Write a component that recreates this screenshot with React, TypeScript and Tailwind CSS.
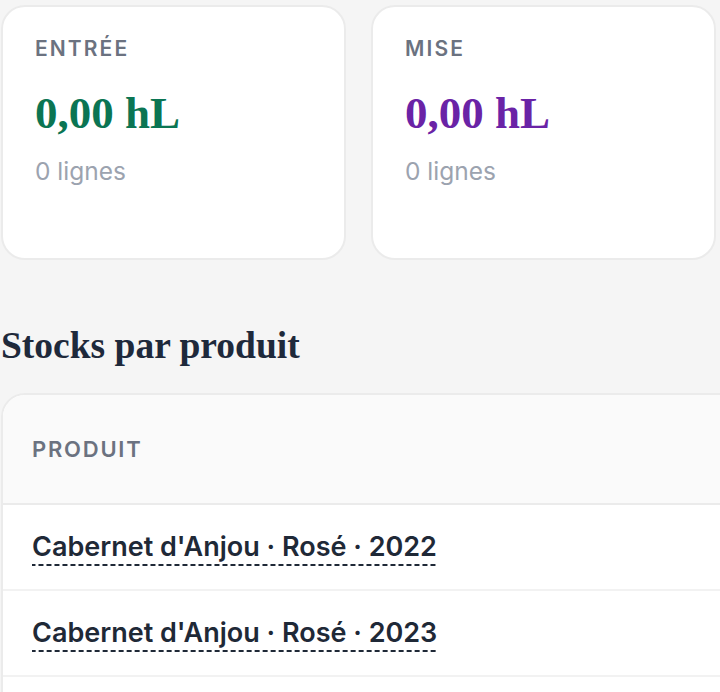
const cards = [
  { label: "Entrée", value: "0,00 hL", color: "text-[#0b7553]", sub: "0 lignes" },
  { label: "Mise", value: "0,00 hL", color: "text-[#6a23a6]", sub: "0 lignes" },
];

const produits = ["Cabernet d'Anjou · Rosé · 2022", "Cabernet d'Anjou · Rosé · 2023"];

export default function App() {
  return (
    <div className="h-screen overflow-hidden bg-[#f5f5f5] font-['Inter','Noto_Sans',sans-serif]">
      <div className="pl-px pt-[5px]">
        {/* Summary cards */}
        <div className="grid grid-cols-[345px_345px] gap-x-[25px]">
          {cards.map((card) => (
            <div
              key={card.label}
              className="h-[255px] rounded-[24px] border-2 border-[#ebebeb] bg-white pl-[32px] pt-[30px]"
            >
              <div className="text-[21px] leading-[24px] font-semibold uppercase tracking-[0.1em] text-[#6b7280]">
                {card.label}
              </div>
              <div
                className={`mt-[26px] font-['Liberation_Serif','Times_New_Roman',serif] text-[45px] leading-[52px] font-bold ${card.color}`}
              >
                {card.value}
              </div>
              <div className="mt-[16px] text-[24.5px] leading-[32px] text-[#9ca3af]">{card.sub}</div>
            </div>
          ))}
        </div>

        <h2 className="mt-[64px] font-['Liberation_Serif','Times_New_Roman',serif] text-[37.5px] leading-[44px] font-bold text-[#1e293b]">
          Stocks par produit
        </h2>

        {/* Table */}
        <div className="mt-[25px] mr-[-40px] overflow-hidden rounded-tl-[24px] border-2 border-[#ebebeb] bg-white">
          <div className="flex h-[110px] items-center border-b-2 border-[#ebebeb] bg-[#fafafa] pl-[29px]">
            <span className="text-[22px] font-semibold uppercase tracking-[0.08em] text-[#6b7280]">Produit</span>
          </div>
          {produits.map((p) => (
            <div key={p} className="flex h-[86px] items-center border-b-2 border-[#f2f2f2] pl-[29px] pt-[3px]">
              <span className="bg-[linear-gradient(to_right,#1f2937_5px,transparent_5px)] bg-[length:8px_2px] bg-bottom bg-repeat-x pb-[3px] text-[27px] leading-[32px] font-semibold text-[#1f2937]">
                {p}
              </span>
            </div>
          ))}
          <div className="h-[86px]" />
        </div>
      </div>
    </div>
  );
}
